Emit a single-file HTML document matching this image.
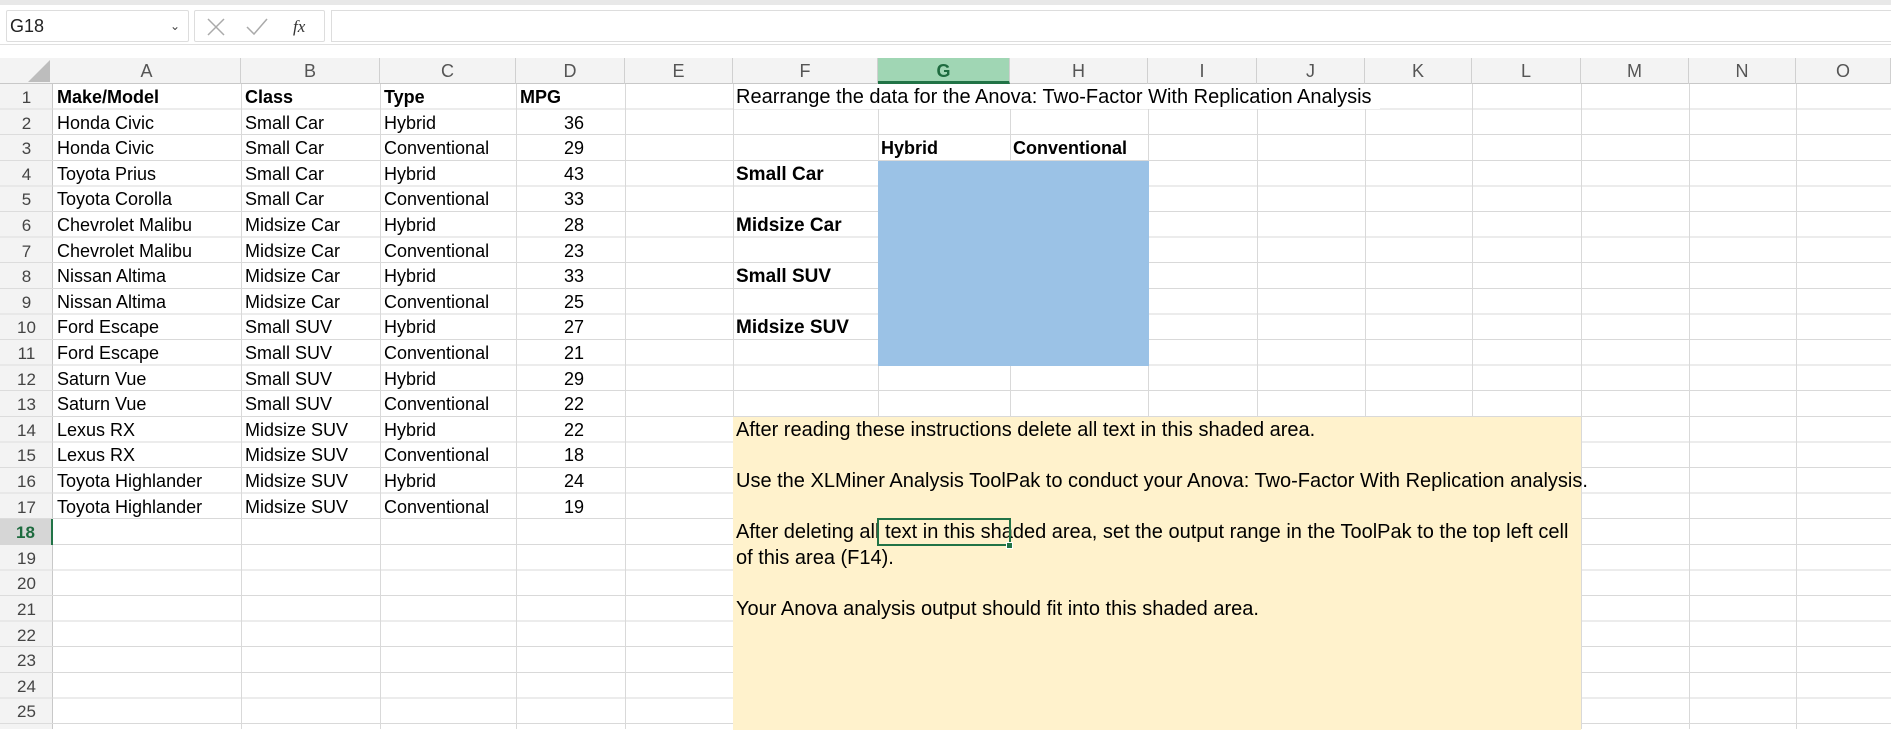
<!DOCTYPE html>
<html><head><meta charset="utf-8"><style>
*{margin:0;padding:0;box-sizing:border-box}
body{width:1891px;height:729px;overflow:hidden;background:#fff;font-family:"Liberation Sans",Arial,sans-serif;position:relative}
.a{position:absolute}
.t{position:absolute;font-size:18px;line-height:25px;height:24.6px;white-space:nowrap;color:#000;padding-top:1px}
.b{font-weight:bold}
.r{text-align:right}
.w{font-size:20px;line-height:24px}
.ch{position:absolute;top:58px;height:26px;font-size:18px;color:#555;text-align:center;line-height:26px;border-right:1px solid #d0d0d0}
.rh{position:absolute;left:0;width:53px;font-size:17px;color:#444;text-align:center;line-height:27px;height:25.6px}
.vl{position:absolute;top:84px;bottom:0;width:1px;background:#d9d9d9}
</style></head><body>
<div class="a" style="left:0;top:0;width:1891px;height:5px;background:#e8e8e8"></div>
<div class="a" style="left:6px;top:10px;width:183px;height:32px;border:1px solid #ddd;border-radius:2px;font-size:18px;line-height:30px;padding-left:3px;color:#222">G18<span style="position:absolute;right:8px;top:0;font-size:12px;color:#444">&#8964;</span></div>
<div class="a" style="left:194px;top:10px;width:131px;height:32px;border:1px solid #ddd;border-radius:2px"></div>
<svg class="a" style="left:205px;top:17px" width="110" height="20"><path d="M3 2 L19 18 M19 2 L3 18" stroke="#aaa" stroke-width="1.5" fill="none"/><path d="M42 10 L49 17 L62 2" stroke="#aaa" stroke-width="1.5" fill="none"/><text x="88" y="15" font-family="Liberation Serif" font-style="italic" font-size="17" fill="#333">fx</text></svg>
<div class="a" style="left:331px;top:10px;width:1560px;height:32px;border:1px solid #ddd;border-right:none"></div>
<div class="a" style="left:0;top:44px;width:1891px;height:1px;background:#e0e0e0"></div>
<div class="a" style="left:0;top:58px;width:1891px;height:26px;background:#f3f3f3;border-bottom:1px solid #c8c8c8"></div>
<div class="a" style="left:0;top:84px;width:53px;height:645px;background:#f3f3f3;border-right:1px solid #c8c8c8"></div>
<svg class="a" style="left:28px;top:60px" width="22" height="22"><path d="M22 0 L22 22 L0 22 Z" fill="#bdbdbd"/></svg>
<div class="a" style="left:53px;top:84px;width:1838px;height:645px;background:repeating-linear-gradient(to bottom,transparent 0,transparent 24.6px,#d9d9d9 24.6px,#d9d9d9 25.6px)"></div>
<div class="a" style="left:0;top:84px;width:53px;height:645px;background:repeating-linear-gradient(to bottom,transparent 0,transparent 24.6px,#dcdcdc 24.6px,#dcdcdc 25.6px)"></div>
<div class="vl" style="left:241px"></div><div class="vl" style="left:380px"></div><div class="vl" style="left:516px"></div><div class="vl" style="left:625px"></div><div class="vl" style="left:733px"></div><div class="vl" style="left:878px"></div><div class="vl" style="left:1010px"></div><div class="vl" style="left:1148px"></div><div class="vl" style="left:1257px"></div><div class="vl" style="left:1365px"></div><div class="vl" style="left:1472px"></div><div class="vl" style="left:1581px"></div><div class="vl" style="left:1689px"></div><div class="vl" style="left:1796px"></div>
<div class="ch" style="left:53px;width:188px">A</div><div class="ch" style="left:241px;width:139px">B</div><div class="ch" style="left:380px;width:136px">C</div><div class="ch" style="left:516px;width:109px">D</div><div class="ch" style="left:625px;width:108px">E</div><div class="ch" style="left:733px;width:145px">F</div>
<div class="ch" style="left:878px;width:132px;background:#a0d6b4;color:#1e6b3f;font-weight:bold;border-bottom:3px solid #217346">G</div>
<div class="ch" style="left:1010px;width:138px">H</div><div class="ch" style="left:1148px;width:109px">I</div><div class="ch" style="left:1257px;width:108px">J</div><div class="ch" style="left:1365px;width:107px">K</div><div class="ch" style="left:1472px;width:109px">L</div><div class="ch" style="left:1581px;width:108px">M</div><div class="ch" style="left:1689px;width:107px">N</div><div class="ch" style="left:1796px;width:95px">O</div>
<div class="a" style="left:878px;top:160.8px;width:271px;height:204.8px;background:#9bc2e6"></div>
<div class="a" style="left:733px;top:416.8px;width:848px;height:313px;background:#fff2cc"></div>
<div class="rh" style="top:84px">1</div><div class="rh" style="top:109.6px">2</div><div class="rh" style="top:135.2px">3</div><div class="rh" style="top:160.8px">4</div><div class="rh" style="top:186.4px">5</div><div class="rh" style="top:212px">6</div><div class="rh" style="top:237.6px">7</div><div class="rh" style="top:263.2px">8</div><div class="rh" style="top:288.8px">9</div><div class="rh" style="top:314.4px">10</div><div class="rh" style="top:340px">11</div><div class="rh" style="top:365.6px">12</div><div class="rh" style="top:391.2px">13</div><div class="rh" style="top:416.8px">14</div><div class="rh" style="top:442.4px">15</div><div class="rh" style="top:468px">16</div><div class="rh" style="top:493.6px">17</div>
<div class="rh" style="top:519.2px;background:#d6d6d6;color:#1e6b3f;font-weight:bold;border-right:2px solid #217346">18</div>
<div class="rh" style="top:544.8px">19</div><div class="rh" style="top:570.4px">20</div><div class="rh" style="top:596px">21</div><div class="rh" style="top:621.6px">22</div><div class="rh" style="top:647.2px">23</div><div class="rh" style="top:672.8px">24</div><div class="rh" style="top:698.4px">25</div>
<div class="t b" style="left:57px;top:84px">Make/Model</div><div class="t b" style="left:245px;top:84px">Class</div><div class="t b" style="left:384px;top:84px">Type</div><div class="t b" style="left:520px;top:84px">MPG</div>
<div class="t" style="left:57px;top:109.6px">Honda Civic</div><div class="t" style="left:245px;top:109.6px">Small Car</div><div class="t" style="left:384px;top:109.6px">Hybrid</div><div class="t r" style="left:516px;width:68px;top:109.6px">36</div>
<div class="t" style="left:57px;top:135.2px">Honda Civic</div><div class="t" style="left:245px;top:135.2px">Small Car</div><div class="t" style="left:384px;top:135.2px">Conventional</div><div class="t r" style="left:516px;width:68px;top:135.2px">29</div>
<div class="t" style="left:57px;top:160.8px">Toyota Prius</div><div class="t" style="left:245px;top:160.8px">Small Car</div><div class="t" style="left:384px;top:160.8px">Hybrid</div><div class="t r" style="left:516px;width:68px;top:160.8px">43</div>
<div class="t" style="left:57px;top:186.4px">Toyota Corolla</div><div class="t" style="left:245px;top:186.4px">Small Car</div><div class="t" style="left:384px;top:186.4px">Conventional</div><div class="t r" style="left:516px;width:68px;top:186.4px">33</div>
<div class="t" style="left:57px;top:212px">Chevrolet Malibu</div><div class="t" style="left:245px;top:212px">Midsize Car</div><div class="t" style="left:384px;top:212px">Hybrid</div><div class="t r" style="left:516px;width:68px;top:212px">28</div>
<div class="t" style="left:57px;top:237.6px">Chevrolet Malibu</div><div class="t" style="left:245px;top:237.6px">Midsize Car</div><div class="t" style="left:384px;top:237.6px">Conventional</div><div class="t r" style="left:516px;width:68px;top:237.6px">23</div>
<div class="t" style="left:57px;top:263.2px">Nissan Altima</div><div class="t" style="left:245px;top:263.2px">Midsize Car</div><div class="t" style="left:384px;top:263.2px">Hybrid</div><div class="t r" style="left:516px;width:68px;top:263.2px">33</div>
<div class="t" style="left:57px;top:288.8px">Nissan Altima</div><div class="t" style="left:245px;top:288.8px">Midsize Car</div><div class="t" style="left:384px;top:288.8px">Conventional</div><div class="t r" style="left:516px;width:68px;top:288.8px">25</div>
<div class="t" style="left:57px;top:314.4px">Ford Escape</div><div class="t" style="left:245px;top:314.4px">Small SUV</div><div class="t" style="left:384px;top:314.4px">Hybrid</div><div class="t r" style="left:516px;width:68px;top:314.4px">27</div>
<div class="t" style="left:57px;top:340px">Ford Escape</div><div class="t" style="left:245px;top:340px">Small SUV</div><div class="t" style="left:384px;top:340px">Conventional</div><div class="t r" style="left:516px;width:68px;top:340px">21</div>
<div class="t" style="left:57px;top:365.6px">Saturn Vue</div><div class="t" style="left:245px;top:365.6px">Small SUV</div><div class="t" style="left:384px;top:365.6px">Hybrid</div><div class="t r" style="left:516px;width:68px;top:365.6px">29</div>
<div class="t" style="left:57px;top:391.2px">Saturn Vue</div><div class="t" style="left:245px;top:391.2px">Small SUV</div><div class="t" style="left:384px;top:391.2px">Conventional</div><div class="t r" style="left:516px;width:68px;top:391.2px">22</div>
<div class="t" style="left:57px;top:416.8px">Lexus RX</div><div class="t" style="left:245px;top:416.8px">Midsize SUV</div><div class="t" style="left:384px;top:416.8px">Hybrid</div><div class="t r" style="left:516px;width:68px;top:416.8px">22</div>
<div class="t" style="left:57px;top:442.4px">Lexus RX</div><div class="t" style="left:245px;top:442.4px">Midsize SUV</div><div class="t" style="left:384px;top:442.4px">Conventional</div><div class="t r" style="left:516px;width:68px;top:442.4px">18</div>
<div class="t" style="left:57px;top:468px">Toyota Highlander</div><div class="t" style="left:245px;top:468px">Midsize SUV</div><div class="t" style="left:384px;top:468px">Hybrid</div><div class="t r" style="left:516px;width:68px;top:468px">24</div>
<div class="t" style="left:57px;top:493.6px">Toyota Highlander</div><div class="t" style="left:245px;top:493.6px">Midsize SUV</div><div class="t" style="left:384px;top:493.6px">Conventional</div><div class="t r" style="left:516px;width:68px;top:493.6px">19</div>
<div class="t w" style="left:734px;top:84px;background:#fff;padding-left:2px;padding-right:8px">Rearrange the data for the Anova: Two-Factor With Replication Analysis</div>
<div class="t b" style="left:881px;top:135.2px">Hybrid</div><div class="t b" style="left:1013px;top:135.2px">Conventional</div>
<div class="t b" style="left:736px;top:160.8px;font-size:19px">Small Car</div>
<div class="t b" style="left:736px;top:212px;font-size:19px">Midsize Car</div>
<div class="t b" style="left:736px;top:263.2px;font-size:19px">Small SUV</div>
<div class="t b" style="left:736px;top:314.4px;font-size:19px">Midsize SUV</div>
<div class="t w" style="left:736px;top:416.8px">After reading these instructions delete all text in this shaded area.</div>
<div class="t w" style="left:736px;top:468px">Use the XLMiner Analysis ToolPak to conduct your Anova: Two-Factor With Replication analysis.</div>
<div class="t w" style="left:736px;top:519.2px">After deleting all text in this shaded area, set the output range in the ToolPak to the top left cell</div>
<div class="t w" style="left:736px;top:544.8px">of this area (F14).</div>
<div class="t w" style="left:736px;top:596px">Your Anova analysis output should fit into this shaded area.</div>
<div class="a" style="left:877px;top:518px;width:134px;height:28px;border:2px solid #217346"></div>
<div class="a" style="left:1006px;top:542px;width:7px;height:7px;background:#217346;border:1px solid #fff"></div>
</body></html>
